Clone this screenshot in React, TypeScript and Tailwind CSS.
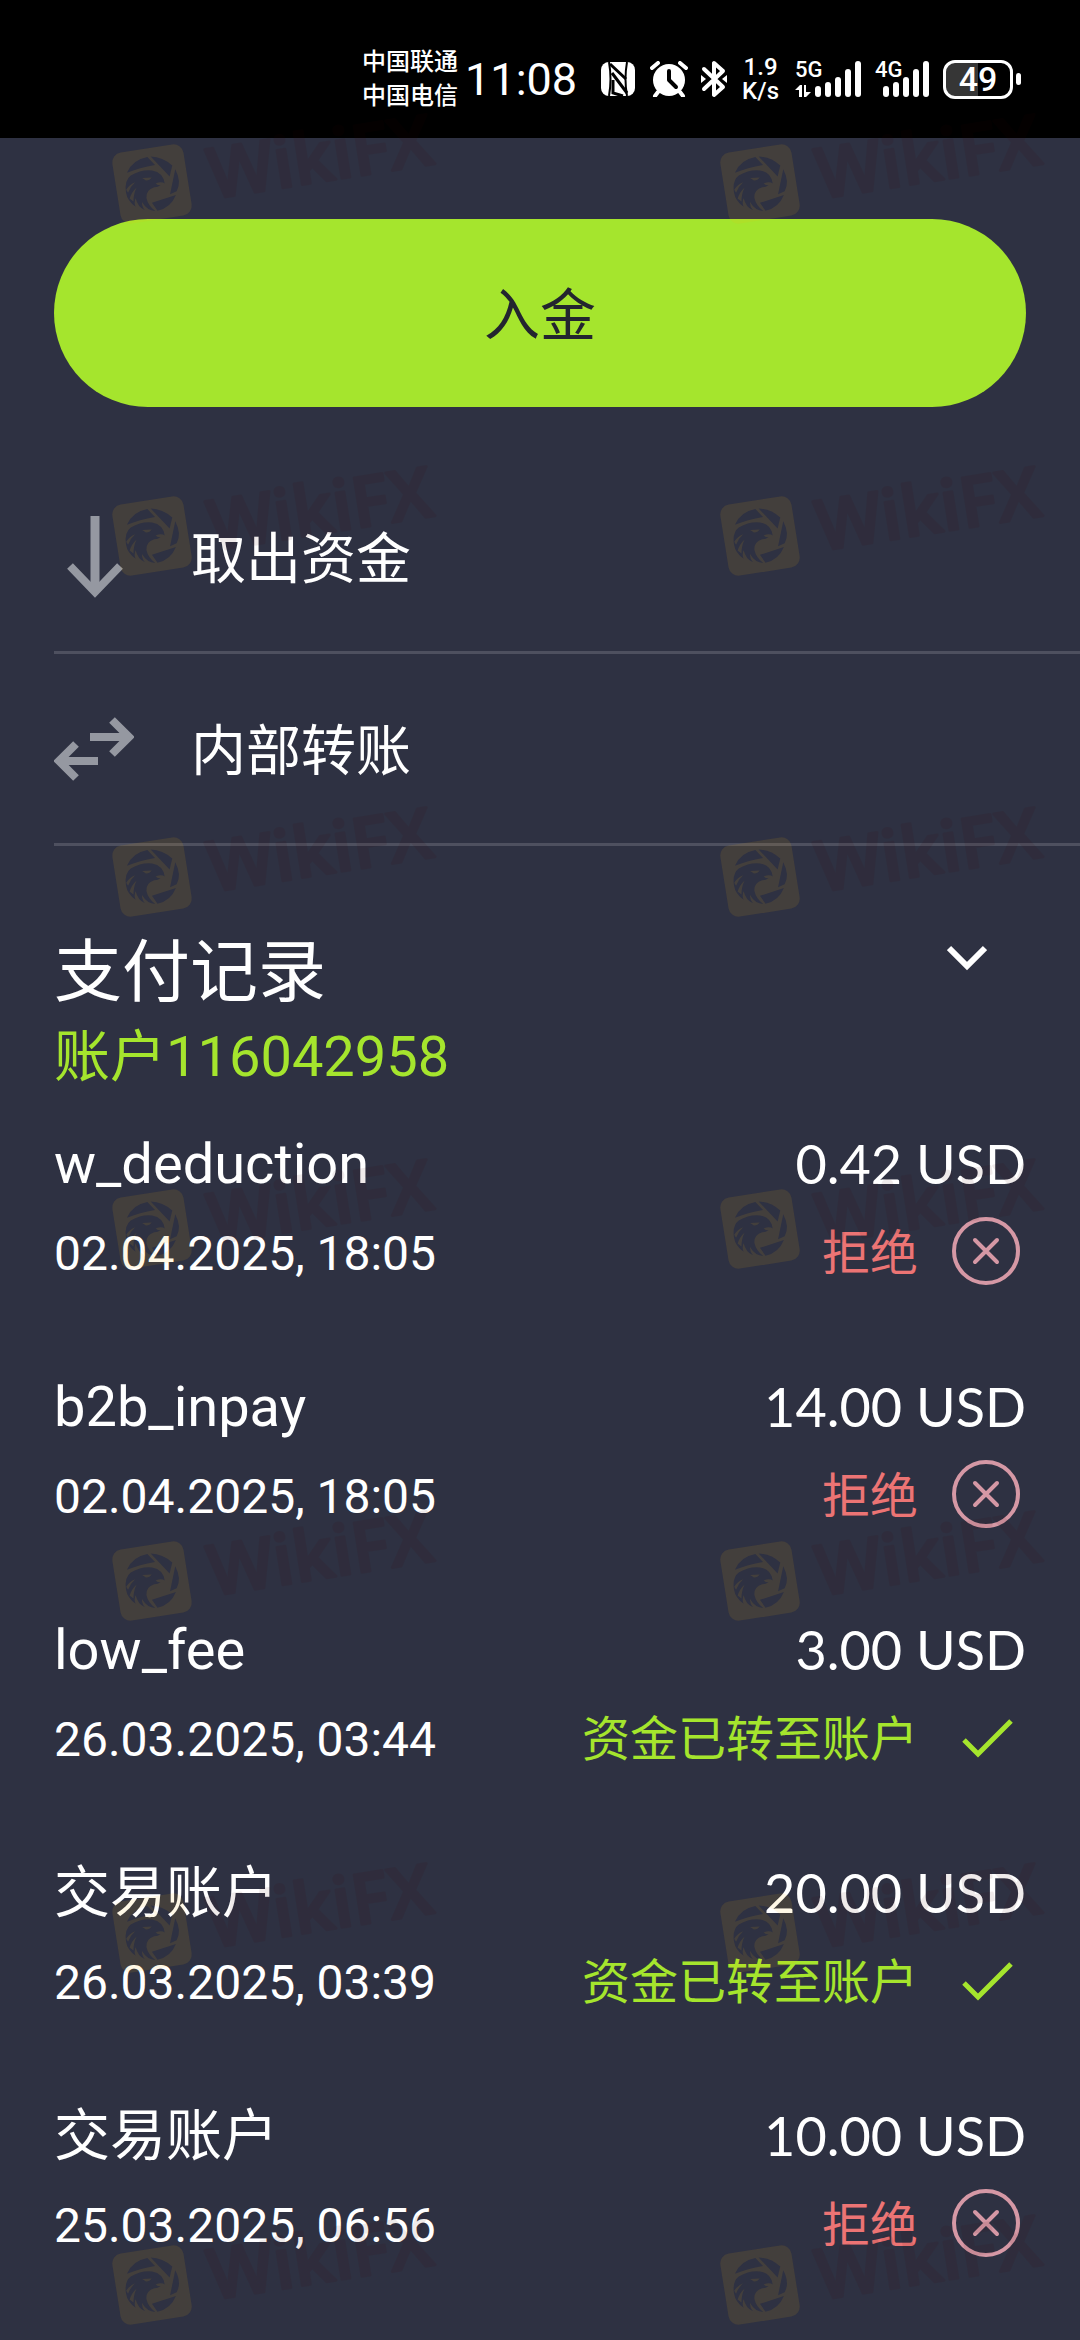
import { useId } from "react";

type Status = "rejected" | "done";

type Payment = {
	id: number;
	name: string;
	amount: string;
	date: string;
	status: Status;
};

const payments: Payment[] = [
	{ id: 1, name: "w_deduction", amount: "0.42 USD", date: "02.04.2025, 18:05", status: "rejected" },
	{ id: 2, name: "b2b_inpay", amount: "14.00 USD", date: "02.04.2025, 18:05", status: "rejected" },
	{ id: 3, name: "low_fee", amount: "3.00 USD", date: "26.03.2025, 03:44", status: "done" },
	{ id: 4, name: "交易账户", amount: "20.00 USD", date: "26.03.2025, 03:39", status: "done" },
	{ id: 5, name: "交易账户", amount: "10.00 USD", date: "25.03.2025, 06:56", status: "rejected" },
];

function SignalBars() {
	return (
		<svg viewBox="0 0 46 38" className="h-[38px] w-[46px]" fill="#fff" aria-hidden="true">
			<rect x="0" y="26" width="6" height="11" rx="3" />
			<rect x="10" y="22" width="6" height="15" rx="3" />
			<rect x="20" y="17" width="6" height="20" rx="3" />
			<rect x="30" y="9" width="6" height="28" rx="3" />
			<rect x="40" y="1" width="6" height="36" rx="3" />
		</svg>
	);
}

function StatusBar() {
	return (
		<header className="flex h-[138px] items-center justify-end bg-black pt-5 pr-[59px] text-white">
			<div className="mr-[7px] text-[24px] leading-[34px] font-medium">
				<p>中国联通</p>
				<p>中国电信</p>
			</div>
			<time className="mr-6 text-[45px] leading-none">11:08</time>
			<svg viewBox="0 0 34 36" className="mr-[15px] h-9 w-[34px]" aria-hidden="true">
				<rect x="0" y="1" width="34" height="34" rx="8" fill="#fff" />
				<path d="M8 1q3 17 0 34M26 35q-3-17 0-34" stroke="#000" strokeWidth="2" fill="none" />
				<path d="M9 3l16 15M11 12l15 20M12 19v13l10 3" stroke="#000" strokeWidth="3" fill="none" />
			</svg>
			<svg viewBox="0 0 38 36" className="mr-3 h-9 w-[38px]" aria-hidden="true">
				<circle cx="19" cy="19" r="16" fill="#fff" />
				<path d="M2 7l6-5M36 7l-6-5M8 31l-3 4M30 31l3 4" stroke="#fff" strokeWidth="4" strokeLinecap="round" />
				<path d="M19 10v9l7 7" stroke="#000" strokeWidth="4" strokeLinecap="round" strokeLinejoin="round" fill="none" />
			</svg>
			<svg viewBox="0 0 28 38" className="mr-3.5 h-[38px] w-7" aria-hidden="true">
				<path d="M4 9l19 18-9 8V22M4 29l19-18-9-8v12" stroke="#fff" strokeWidth="4" strokeLinejoin="round" strokeLinecap="round" fill="none" />
				<path d="M1 15l5 4-5 4zM27 15l-5 4 5 4z" fill="#fff" />
			</svg>
			<div className="mr-4 text-center text-[24px] leading-[24px] font-medium">
				<p>1.9</p>
				<p>K/s</p>
			</div>
			<div className="relative mr-3.5 pl-5">
				<SignalBars />
				<span className="absolute top-0 left-0 text-[22px] leading-5 font-medium">5G</span>
				<svg viewBox="0 0 16 13" className="absolute bottom-0 left-0 h-[13px] w-4" fill="#fff" aria-hidden="true">
					<path d="M0 5l5-5h2v12H4V5zM9 0h2v7h5l-5 5H9z" />
				</svg>
			</div>
			<div className="relative mr-3.5 pl-2">
				<SignalBars />
				<span className="absolute top-0 left-0 text-[22px] leading-5 font-medium">4G</span>
			</div>
			<div className="flex items-center gap-[3px]">
				<div className="flex h-[39px] w-[70px] items-center justify-center rounded-xl border-3 border-white bg-linear-to-r from-[#363636] from-50% to-black to-50% text-[34px] leading-none font-medium">
					49
				</div>
				<div className="h-3 w-[5px] rounded-sm bg-white" />
			</div>
		</header>
	);
}

function Chevron() {
	return (
		<svg viewBox="0 0 40 26" className="h-[26px] w-10" aria-hidden="true">
			<path d="M2 3l18 18L38 3" stroke="#fff" strokeWidth="6" fill="none" />
		</svg>
	);
}

function ArrowDown() {
	return (
		<svg viewBox="0 0 80 82" className="h-[82px] w-20" fill="none" stroke="#9598a1" aria-hidden="true">
			<path d="M41 0v74" strokeWidth="9" />
			<path d="M16 50l25 26 25-26" strokeWidth="8" />
		</svg>
	);
}

function ArrowsSwap() {
	return (
		<svg viewBox="0 0 80 66" className="h-[66px] w-20" fill="none" stroke="#9598a1" strokeWidth="8" aria-hidden="true">
			<path d="M36 21h39M58 4l17 17-17 17M44 45H5M22 28L5 45l17 17" />
		</svg>
	);
}

function StatusIcon({ status }: { status: Status }) {
	if (status === "done") {
		return (
			<svg viewBox="0 0 68 68" className="size-[68px]" aria-hidden="true">
				<path d="M12 37l14 14 33-33" stroke="#a5e52d" strokeWidth="5" fill="none" />
			</svg>
		);
	}
	return (
		<svg viewBox="0 0 68 68" className="size-[68px]" fill="none" stroke="#d598a5" strokeWidth="4" aria-hidden="true">
			<circle cx="34" cy="34" r="32" />
			<path d="M23 23l22 22M45 23L23 45" strokeLinecap="round" />
		</svg>
	);
}

function PaymentRow({ payment }: { payment: Payment }) {
	const done = payment.status === "done";
	return (
		<li>
			<div className="flex h-20 items-center justify-between text-[56px]">
				<span className="pt-0.5">{payment.name}</span>
				<span className="font-[Lato] text-[54px]">{payment.amount}</span>
			</div>
			<div className="flex h-24 items-center justify-between text-[48px]">
				<time className="pt-1.5">{payment.date}</time>
				<div className="flex items-center gap-[34px] pr-1.5">
					<span className={done ? "pt-1.5 text-[#a5e52d]" : "pt-1.5 text-[#ec7474]"}>
						{done ? "资金已转至账户" : "拒绝"}
					</span>
					<StatusIcon status={payment.status} />
				</div>
			</div>
		</li>
	);
}

function WatermarkMark() {
	const mask = useId();
	return (
		<svg viewBox="0 0 350 140" className="h-[140px] w-[350px] overflow-visible">
			<mask id={mask}>
				<rect width="350" height="140" fill="#fff" />
				<g transform="translate(5 39) scale(0.333)">
					<path d="M72 108Q95 72 140 71L159 98Q112 99 72 108Z" />
					<path d="M150 71Q186 78 210 108L197 139Z" />
					<path d="M217 120Q231 160 211 186L190 192Z" />
					<path d="M132 209L207 197Q185 233 145 235Z" />
					<path d="M60 166Q60 130 82 118Q118 104 148 113Q180 124 179 158Q172 149 152 153Q158 160 166 161Q156 166 146 164Q120 168 118 192Q119 214 138 235Q114 230 103 202Q100 216 108 228Q88 216 86 188Q78 200 82 213Q60 192 60 166Z" />
					<path d="M115 131L143 134Q136 142 125 140ZM62 158Q74 144 92 140Q76 150 66 168ZM68 186Q76 168 94 156Q82 172 78 196Z" fill="#fff" />
				</g>
			</mask>
			<rect x="16" y="54" width="72" height="72" rx="10" transform="rotate(-9 52 90)" fill="#ffbe0a" fillOpacity="0.1" mask={`url(#${mask})`} />
			<g opacity="0.08">
				<text x="112" y="105" transform="rotate(-9 112 105)" fontFamily="Open Sans" fontWeight="600" fontSize="70" fill="#3c0000" stroke="#3c0000" strokeWidth="3" strokeLinejoin="round">
					WikiFX
				</text>
			</g>
		</svg>
	);
}

function Watermark() {
	return (
		<div className="pointer-events-none absolute inset-0 overflow-hidden pt-[94px] pl-[100px]" aria-hidden="true">
			{Array.from({ length: 7 }, (_, i) => (
				<div key={i} className="grid h-[352px] grid-cols-[608px_1fr] nth-2:h-[341px]">
					<WatermarkMark />
					<WatermarkMark />
				</div>
			))}
		</div>
	);
}

export default function App() {
	return (
		<div className="relative min-h-screen bg-[#2e3142] font-[Roboto,'Noto_Sans_CJK_SC',sans-serif] text-white">
			<StatusBar />
			<main>
				<div className="px-[54px] pt-[81px]">
					<button type="button" className="h-[188px] w-full rounded-full bg-[#a5e52d] pt-1.5 text-[56px] text-[#23252f]">
						入金
					</button>
				</div>

				<nav className="pt-[55px] pl-[54px]">
					<button type="button" className="flex h-48 w-full items-center gap-[57px] border-b-3 border-[#4e505f] text-[55px]">
						<ArrowDown />
						<span className="pt-1.5">取出资金</span>
					</button>
					<button type="button" className="flex h-48 w-full items-center gap-[57px] border-b-3 border-[#4e505f] text-[55px]">
						<ArrowsSwap />
						<span className="pt-1.5">内部转账</span>
					</button>
				</nav>

				<section className="px-[54px] pt-[85px]">
					<div className="flex items-start justify-between">
						<h1 className="text-[68px] leading-[84px]">支付记录</h1>
						<button type="button" aria-label="展开" className="mt-3.5 mr-[39px]">
							<Chevron />
						</button>
					</div>
					<p className="text-[56px] leading-[85px] text-[#a5e52d]">账户116042958</p>
					<ul className="flex flex-col gap-[67px] pt-[23px]">
						{payments.map((payment) => (
							<PaymentRow key={payment.id} payment={payment} />
						))}
					</ul>
				</section>
			</main>
			<Watermark />
		</div>
	);
}
